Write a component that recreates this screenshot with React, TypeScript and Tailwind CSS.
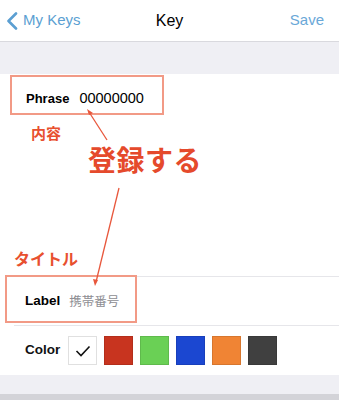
import React from 'react';

const swatches = ['bg-[#c8341f]', 'bg-[#6ad055]', 'bg-[#1b47d1]', 'bg-[#f08434]', 'bg-[#404040]'];

function Nav() {
  return (
    <div className="relative flex h-[42px] items-center border-b border-[#d9d9de] bg-white text-[15px]">
      <div className="flex items-center pl-[6px] text-[#5b9fd2]">
        <svg width="12" height="18" viewBox="0 0 12 18" className="mr-[5px]">
          <path d="M10 1.5 L2.5 9 L10 16.5" fill="none" stroke="#5b9fd2" strokeWidth="2.6" strokeLinecap="round" strokeLinejoin="round" />
        </svg>
        <span>My Keys</span>
      </div>
      <div className="absolute left-0 right-0 text-center text-[16px] font-medium text-black pointer-events-none">Key</div>
      <div className="ml-auto pr-[15px] text-[#6aa8d8]">Save</div>
    </div>
  );
}

function Annotations() {
  return (
    <>
      <div className="absolute left-[10px] top-[75px] h-[40px] w-[154px] border-2 border-[#f29a86]" />
      <div className="absolute left-[5px] top-[275px] h-[48px] w-[132px] border-2 border-[#f29a86]" />
      <div className="absolute left-[31px] top-[123px] text-[15px] font-bold text-[#e8502f]">内容</div>
      <div className="absolute left-[88px] top-[141px] text-[28px] font-bold tracking-[0.5px] text-[#e54a2c]">登録する</div>
      <div className="absolute left-[14px] top-[248px] text-[16px] font-bold text-[#e8502f]">タイトル</div>
      <svg className="pointer-events-none absolute left-0 top-0" width="339" height="400">
        <line x1="107" y1="140" x2="89" y2="112" stroke="#e8573c" strokeWidth="1.3" />
        <path d="M87 109 L93 113 L89 115 Z" fill="#e8573c" />
        <line x1="119" y1="188" x2="96" y2="282" stroke="#e8573c" strokeWidth="1.3" />
        <path d="M95 286 L93 279 L98 280 Z" fill="#e8573c" />
      </svg>
    </>
  );
}

export default function App() {
  return (
    <div
      className="relative h-[400px] w-[339px] overflow-hidden bg-[#efeff4]"
      style={{ fontFamily: '"Liberation Sans", "Noto Sans CJK JP", sans-serif' }}
    >
      <Nav />
      <div className="h-[32px]" />
      <div className="bg-white">
        <div className="h-[202px]">
          <div className="flex h-[48px] items-center pl-[26px] pt-[2px] text-black">
            <span className="text-[13px] font-bold">Phrase</span>
            <span className="ml-[10px] text-[14.5px]">00000000</span>
          </div>
        </div>
        <div className="ml-[14px] border-t border-[#e6e6ea]" />
        <div className="flex h-[48px] items-center pl-[25px]">
          <span className="text-[13.5px] font-bold text-black">Label</span>
          <span className="ml-[9px] text-[12.5px] text-[#8e8e93]" style={{ fontFamily: '"Noto Sans CJK JP", sans-serif' }}>携帯番号</span>
        </div>
        <div className="ml-[14px] border-t border-[#e6e6ea]" />
        <div className="flex h-[49px] items-center pl-[25px]">
          <span className="w-[43px] text-[13.5px] font-bold text-[#111]">Color</span>
          <div className="flex gap-[7px]">
            <div className="flex h-[29px] w-[29px] items-center justify-center border border-[#e0e0e0] bg-white">
              <svg width="16" height="12" viewBox="0 0 16 12">
                <path d="M1.5 6 L6 10.5 L14.5 1.5" fill="none" stroke="#111" strokeWidth="1.6" />
              </svg>
            </div>
            {swatches.map((c) => (
              <div key={c} className={`h-[29px] w-[29px] ${c} border border-black/10`} />
            ))}
          </div>
        </div>
      </div>
      <div className="h-[19px]" />
      <div className="h-[10px] bg-[#d3d3d8]" />
      <Annotations />
    </div>
  );
}
